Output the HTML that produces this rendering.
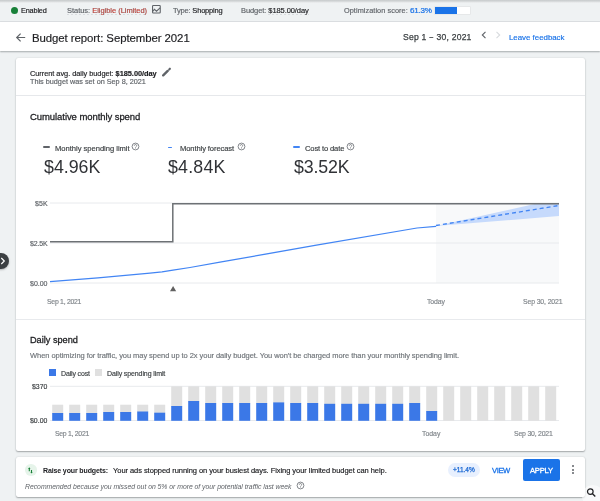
<!DOCTYPE html>
<html><head><meta charset="utf-8"><style>
html,body{margin:0;padding:0;}
body{width:600px;height:501px;overflow:hidden;position:relative;background:#eff2f3;font-family:"Liberation Sans",sans-serif;}
.t{position:absolute;line-height:1;white-space:nowrap;will-change:transform;}
</style></head><body>
<div style="position:absolute;left:0;top:0;width:600px;height:21px;background:linear-gradient(#c9cdce 0,#cfd2d3 1px,#e7e9ea 2.3px,#eff2f3 3.5px);border-bottom:1px solid #dcdfe2"></div><div style="position:absolute;left:11.1px;top:6.9px;width:7px;height:7px;border-radius:50%;background:#188038"></div><div style="position:absolute;left:67px;top:14px;width:80px;height:1px;background:repeating-linear-gradient(90deg,#d9dcdf 0 2px,transparent 2px 4px)"></div><svg style="position:absolute;left:152px;top:5.2px" width="9" height="9" viewBox="0 0 9 9"><rect x="0.55" y="0.55" width="7.7" height="7.5" rx="0.7" fill="none" stroke="#5f6368" stroke-width="1.1"/><polyline points="0.6,6.5 2.4,4.3 4.5,6.2 8.1,2.9" fill="none" stroke="#5f6368" stroke-width="1.05"/></svg><div style="position:absolute;left:268px;top:14px;width:41px;height:1px;background:repeating-linear-gradient(90deg,#d9dcdf 0 2px,transparent 2px 4px)"></div><div style="position:absolute;left:434.8px;top:6.7px;width:35.3px;height:7.3px;background:#fff;box-shadow:0 0 0 0.6px #dfe1e3"></div><div style="position:absolute;left:435.1px;top:7.0px;width:21.7px;height:6.8px;background:#1a73e8"></div><div style="position:absolute;left:0;top:22px;width:600px;height:29px;background:#fff;box-shadow:0 1px 1.5px rgba(60,64,67,.4)"></div><svg style="position:absolute;left:15px;top:32px" width="11" height="11" viewBox="0 0 11 11"><path d="M10.2 5.5H1.8M5.6 1.6L1.7 5.5L5.6 9.4" fill="none" stroke="#5f6368" stroke-width="1.2"/></svg><svg style="position:absolute;left:480px;top:30.3px" width="8" height="10" viewBox="0 0 8 10"><path d="M5.5 1.8L2.3 5L5.5 8.2" fill="none" stroke="#5f6368" stroke-width="1.1"/></svg><svg style="position:absolute;left:494px;top:30.3px" width="8" height="10" viewBox="0 0 8 10"><path d="M2.5 1.8L5.7 5L2.5 8.2" fill="none" stroke="#d8dbde" stroke-width="1.1"/></svg><div style="position:absolute;left:16px;top:57.5px;width:569px;height:393.3px;border-radius:2px;background:#fff;box-shadow:0 1px 1.5px rgba(60,64,67,.4),0 0 1.5px rgba(60,64,67,.2)"></div><svg style="position:absolute;left:161.2px;top:65.8px" width="11" height="11" viewBox="0 0 11 11"><path d="M2.2 9.4L6.7 4.9" stroke="#5f6368" stroke-width="2.3" stroke-linecap="round"/><path d="M8.2 3.4L8.9 2.7" stroke="#5f6368" stroke-width="2.1" stroke-linecap="round"/></svg><div style="position:absolute;left:16px;top:95.4px;width:569px;height:1px;background:#e6e8eb"></div><div style="position:absolute;left:43px;top:146.1px;width:7px;height:2.2px;border-radius:1.1px;background:#5f6368"></div><svg style="position:absolute;left:131.2px;top:141.5px" width="9" height="9" viewBox="0 0 9 9"><circle cx="4.5" cy="4.5" r="3.4" fill="none" stroke="#6f7378" stroke-width="0.85"/><path d="M3.3 3.7a1.2 1.15 0 1 1 1.75 1.0c-.4.25-.55.45-.55.95" fill="none" stroke="#6f7378" stroke-width="0.8"/><circle cx="4.5" cy="6.6" r="0.45" fill="#6f7378"/></svg><div style="position:absolute;left:168px;top:146.6px;width:4px;height:1.4px;border-radius:.7px;background:#4285f4"></div><svg style="position:absolute;left:237.0px;top:141.5px" width="9" height="9" viewBox="0 0 9 9"><circle cx="4.5" cy="4.5" r="3.4" fill="none" stroke="#6f7378" stroke-width="0.85"/><path d="M3.3 3.7a1.2 1.15 0 1 1 1.75 1.0c-.4.25-.55.45-.55.95" fill="none" stroke="#6f7378" stroke-width="0.8"/><circle cx="4.5" cy="6.6" r="0.45" fill="#6f7378"/></svg><div style="position:absolute;left:292.8px;top:146.3px;width:6.9px;height:2px;border-radius:1px;background:#4285f4"></div><svg style="position:absolute;left:346.2px;top:141.5px" width="9" height="9" viewBox="0 0 9 9"><circle cx="4.5" cy="4.5" r="3.4" fill="none" stroke="#6f7378" stroke-width="0.85"/><path d="M3.3 3.7a1.2 1.15 0 1 1 1.75 1.0c-.4.25-.55.45-.55.95" fill="none" stroke="#6f7378" stroke-width="0.8"/><circle cx="4.5" cy="6.6" r="0.45" fill="#6f7378"/></svg><svg style="position:absolute;left:0;top:0" width="600" height="501" viewBox="0 0 600 501"><rect x="436" y="203" width="123" height="80" fill="#f8f9fa"/><line x1="50" y1="203" x2="559" y2="203" stroke="#e8eaed" stroke-width="1"/><line x1="50" y1="243" x2="559" y2="243" stroke="#e8eaed" stroke-width="1"/><line x1="50" y1="283" x2="559" y2="283" stroke="#e8eaed" stroke-width="1"/><polygon points="436,225.9 534.6,204 559,204 559,216.1" fill="#c6dafc"/><polyline points="50,241.7 172.8,241.7 172.8,203.7 559,203.7" fill="none" stroke="#6d7175" stroke-width="1.5"/><polyline points="50,281.7 98,277.8 150,273.1 162,271.9 173,270.2 190,267.5 220,262.2 315,245.4 417,228 436,226.3" fill="none" stroke="#4285f4" stroke-width="1.25" stroke-linejoin="round"/><line x1="436" y1="225.5" x2="559" y2="205.5" stroke="#4285f4" stroke-width="1.3" stroke-dasharray="4 3"/><polygon points="170,291.2 173.1,286.1 176.2,291.2" fill="#606060"/><line x1="50" y1="386.3" x2="559" y2="386.3" stroke="#e8eaed" stroke-width="1"/><line x1="50" y1="420.5" x2="559" y2="420.5" stroke="#e8eaed" stroke-width="1"/><rect x="52.2" y="404.7" width="11" height="8.8" fill="#e0e0e0"/><rect x="52.2" y="413" width="11" height="7.8" fill="#3b78e7"/><rect x="69.2" y="404.7" width="11" height="8.8" fill="#e0e0e0"/><rect x="69.2" y="413" width="11" height="7.8" fill="#3b78e7"/><rect x="86.2" y="404.7" width="11" height="8.8" fill="#e0e0e0"/><rect x="86.2" y="413" width="11" height="7.8" fill="#3b78e7"/><rect x="103.2" y="404.7" width="11" height="7.8" fill="#e0e0e0"/><rect x="103.2" y="412" width="11" height="8.8" fill="#3b78e7"/><rect x="120.2" y="404.7" width="11" height="7.8" fill="#e0e0e0"/><rect x="120.2" y="412" width="11" height="8.8" fill="#3b78e7"/><rect x="137.2" y="404.7" width="11" height="7.3" fill="#e0e0e0"/><rect x="137.2" y="411.5" width="11" height="9.3" fill="#3b78e7"/><rect x="154.2" y="404.7" width="11" height="8.5" fill="#e0e0e0"/><rect x="154.2" y="412.7" width="11" height="8.1" fill="#3b78e7"/><rect x="171.2" y="386.3" width="11" height="20.2" fill="#e0e0e0"/><rect x="171.2" y="406" width="11" height="14.8" fill="#3b78e7"/><rect x="188.2" y="386.3" width="11" height="15.2" fill="#e0e0e0"/><rect x="188.2" y="401" width="11" height="19.8" fill="#3b78e7"/><rect x="205.2" y="386.3" width="11" height="17.2" fill="#e0e0e0"/><rect x="205.2" y="403" width="11" height="17.8" fill="#3b78e7"/><rect x="222.2" y="386.3" width="11" height="17.2" fill="#e0e0e0"/><rect x="222.2" y="403" width="11" height="17.8" fill="#3b78e7"/><rect x="239.2" y="386.3" width="11" height="17.2" fill="#e0e0e0"/><rect x="239.2" y="403" width="11" height="17.8" fill="#3b78e7"/><rect x="256.2" y="386.3" width="11" height="17.2" fill="#e0e0e0"/><rect x="256.2" y="403" width="11" height="17.8" fill="#3b78e7"/><rect x="273.2" y="386.3" width="11" height="16.6" fill="#e0e0e0"/><rect x="273.2" y="402.4" width="11" height="18.4" fill="#3b78e7"/><rect x="290.2" y="386.3" width="11" height="17.2" fill="#e0e0e0"/><rect x="290.2" y="403" width="11" height="17.8" fill="#3b78e7"/><rect x="307.2" y="386.3" width="11" height="17.2" fill="#e0e0e0"/><rect x="307.2" y="403" width="11" height="17.8" fill="#3b78e7"/><rect x="324.2" y="386.3" width="11" height="18.0" fill="#e0e0e0"/><rect x="324.2" y="403.8" width="11" height="17.0" fill="#3b78e7"/><rect x="341.2" y="386.3" width="11" height="18.0" fill="#e0e0e0"/><rect x="341.2" y="403.8" width="11" height="17.0" fill="#3b78e7"/><rect x="358.2" y="386.3" width="11" height="18.0" fill="#e0e0e0"/><rect x="358.2" y="403.8" width="11" height="17.0" fill="#3b78e7"/><rect x="375.2" y="386.3" width="11" height="18.0" fill="#e0e0e0"/><rect x="375.2" y="403.8" width="11" height="17.0" fill="#3b78e7"/><rect x="392.2" y="386.3" width="11" height="18.0" fill="#e0e0e0"/><rect x="392.2" y="403.8" width="11" height="17.0" fill="#3b78e7"/><rect x="409.2" y="386.3" width="11" height="17.2" fill="#e0e0e0"/><rect x="409.2" y="403" width="11" height="17.8" fill="#3b78e7"/><rect x="426.2" y="386.3" width="11" height="25.2" fill="#e0e0e0"/><rect x="426.2" y="411" width="11" height="9.8" fill="#3b78e7"/><rect x="443.2" y="386.3" width="11" height="34.5" fill="#e0e0e0"/><rect x="460.2" y="386.3" width="11" height="34.5" fill="#e0e0e0"/><rect x="477.2" y="386.3" width="11" height="34.5" fill="#e0e0e0"/><rect x="494.2" y="386.3" width="11" height="34.5" fill="#e0e0e0"/><rect x="511.2" y="386.3" width="11" height="34.5" fill="#e0e0e0"/><rect x="528.2" y="386.3" width="11" height="34.5" fill="#e0e0e0"/><rect x="545.2" y="386.3" width="11" height="34.5" fill="#e0e0e0"/></svg><div style="position:absolute;left:16px;top:319px;width:569px;height:1px;background:#e8eaed"></div><div style="position:absolute;left:49.2px;top:369.2px;width:7px;height:6.6px;background:#3b78e7"></div><div style="position:absolute;left:95px;top:369.2px;width:7px;height:6.6px;background:#e0e0e0"></div><div style="position:absolute;left:16px;top:456.8px;width:569px;height:40.5px;border-radius:2px;background:#fff;box-shadow:0 1px 1.5px rgba(60,64,67,.4),0 0 1.5px rgba(60,64,67,.2)"></div><div style="position:absolute;left:25.05px;top:464.35px;width:11.5px;height:11.5px;border-radius:50%;background:#e6f4ea"></div><svg style="position:absolute;left:25.1px;top:464.7px" width="12" height="12" viewBox="0 0 12 12"><path d="M4.3 6.2V3.4M6.5 5.0V7.4" fill="none" stroke="#188038" stroke-width="1.1"/><path d="M3.1 3.9L4.3 2.2L5.5 3.9zM5.3 6.9L6.5 8.6L7.7 6.9z" fill="#188038"/></svg><svg style="position:absolute;left:296.0px;top:481.3px" width="9" height="9" viewBox="0 0 9 9"><circle cx="4.5" cy="4.5" r="3.4" fill="none" stroke="#6f7378" stroke-width="0.85"/><path d="M3.3 3.7a1.2 1.15 0 1 1 1.75 1.0c-.4.25-.55.45-.55.95" fill="none" stroke="#6f7378" stroke-width="0.8"/><circle cx="4.5" cy="6.6" r="0.45" fill="#6f7378"/></svg><div style="position:absolute;left:448px;top:463px;width:32.4px;height:14px;border-radius:7px;background:#e8f0fe"></div><div style="position:absolute;left:523.1px;top:459.1px;width:37px;height:21.5px;border-radius:2px;background:#1a73e8"></div><div style="position:absolute;left:572.3px;top:465.1px;width:2px;height:2px;border-radius:50%;background:#5f6368"></div><div style="position:absolute;left:572.3px;top:468.8px;width:2px;height:2px;border-radius:50%;background:#5f6368"></div><div style="position:absolute;left:572.3px;top:472.4px;width:2px;height:2px;border-radius:50%;background:#5f6368"></div><div style="position:absolute;left:-7.8px;top:252.8px;width:16.4px;height:16.4px;border-radius:50%;background:#3c4043;box-shadow:0 1px 2px rgba(0,0,0,.25)"></div><svg style="position:absolute;left:0;top:256.3px" width="8" height="10" viewBox="0 0 8 10"><path d="M1.3 2L4.3 5L1.3 8" fill="none" stroke="#fff" stroke-width="1.2"/></svg><div style="position:absolute;left:582px;top:485px;width:22px;height:22px;border-radius:50%;background:rgba(255,255,255,.55)"></div><svg style="position:absolute;left:584px;top:485px" width="14" height="14" viewBox="0 0 14 14"><circle cx="6.3" cy="6.6" r="2.8" fill="none" stroke="#202124" stroke-width="1.2"/><path d="M8.3 8.6L11.3 11.4" stroke="#202124" stroke-width="1.4"/></svg><div class="t" style="left:20.82px;top:6.67px;font-size:7.3px;color:#202124;letter-spacing:-0.161px;-webkit-text-stroke:0.16px #202124;">Enabled</div>
<div class="t" style="left:67.00px;top:7.40px;font-size:7.5px;color:#5f6368;letter-spacing:-0.032px;-webkit-text-stroke:0.16px #5f6368;">Status: <span style="color:#d93025">Eligible (Limited)</span></div>
<div class="t" style="left:172.50px;top:7.40px;font-size:7.5px;color:#5f6368;letter-spacing:-0.185px;-webkit-text-stroke:0.16px #5f6368;">Type: <span style="color:#202124;-webkit-text-stroke:0.15px #202124">Shopping</span></div>
<div class="t" style="left:240.68px;top:6.50px;font-size:7.5px;color:#5f6368;letter-spacing:-0.081px;-webkit-text-stroke:0.16px #5f6368;">Budget: <span style="color:#202124;-webkit-text-stroke:0.15px #202124">$185.00/day</span></div>
<div class="t" style="left:343.54px;top:6.62px;font-size:7.3px;color:#5f6368;letter-spacing:0.067px;-webkit-text-stroke:0.16px #5f6368;">Optimization score:</div>
<div class="t" style="left:409.82px;top:6.94px;font-size:8.1px;color:#1a73e8;letter-spacing:-0.240px;-webkit-text-stroke:0.22px #1a73e8;">61.3%</div>
<div class="t" style="left:32.08px;top:32.95px;font-size:11.4px;color:#202124;letter-spacing:-0.066px;-webkit-text-stroke:0.16px #202124;">Budget report: September 2021</div>
<div class="t" style="left:402.82px;top:32.92px;font-size:8.6px;color:#3c4043;letter-spacing:0.193px;-webkit-text-stroke:0.25px #3c4043;">Sep 1 <span style="display:inline-block;transform:scaleX(.75)">–</span> 30, 2021</div>
<div class="t" style="left:508.82px;top:33.81px;font-size:7.9px;color:#1a73e8;letter-spacing:-0.017px;-webkit-text-stroke:0.16px #1a73e8;">Leave feedback</div>
<div class="t" style="left:29.68px;top:69.74px;font-size:7.4px;color:#202124;letter-spacing:-0.041px;-webkit-text-stroke:0.16px #202124;">Current avg. daily budget: <b>$185.00/day</b></div>
<div class="t" style="left:29.68px;top:77.86px;font-size:7.25px;color:#5f6368;letter-spacing:0.007px;-webkit-text-stroke:0.16px #5f6368;">This budget was set on Sep 8, 2021</div>
<div class="t" style="left:30.00px;top:112.16px;font-size:9.5px;color:#202124;letter-spacing:-0.070px;-webkit-text-stroke:0.26px #202124;">Cumulative monthly spend</div>
<div class="t" style="left:55.00px;top:144.77px;font-size:7.6px;color:#3c4043;letter-spacing:-0.024px;-webkit-text-stroke:0.16px #3c4043;">Monthly spending limit</div>
<div class="t" style="left:179.86px;top:144.57px;font-size:7.6px;color:#3c4043;letter-spacing:-0.107px;-webkit-text-stroke:0.16px #3c4043;">Monthly forecast</div>
<div class="t" style="left:304.82px;top:144.57px;font-size:7.6px;color:#3c4043;letter-spacing:-0.145px;-webkit-text-stroke:0.16px #3c4043;">Cost to date</div>
<div class="t" style="left:43.82px;top:158.53px;font-size:17.8px;color:#303236;">$4.96K</div>
<div class="t" style="left:168.18px;top:158.53px;font-size:17.8px;color:#303236;letter-spacing:0.192px;">$4.84K</div>
<div class="t" style="left:294.00px;top:158.53px;font-size:17.8px;color:#303236;letter-spacing:-0.160px;">$3.52K</div>
<div class="t" style="left:34.68px;top:199.97px;font-size:7.0px;color:#5f6368;letter-spacing:0.160px;-webkit-text-stroke:0.16px #5f6368;">$5K</div>
<div class="t" style="left:29.50px;top:240.07px;font-size:7.0px;color:#5f6368;letter-spacing:-0.160px;-webkit-text-stroke:0.16px #5f6368;">$2.5K</div>
<div class="t" style="left:29.82px;top:279.97px;font-size:7.0px;color:#5f6368;-webkit-text-stroke:0.16px #5f6368;">$0.00</div>
<div class="t" style="left:47.32px;top:299.46px;font-size:6.9px;color:#80868b;letter-spacing:-0.272px;-webkit-text-stroke:0.16px #80868b;">Sep 1, 2021</div>
<div class="t" style="left:427.00px;top:299.16px;font-size:6.9px;color:#80868b;letter-spacing:-0.120px;-webkit-text-stroke:0.16px #80868b;">Today</div>
<div class="t" style="left:522.50px;top:299.16px;font-size:6.9px;color:#80868b;letter-spacing:-0.127px;-webkit-text-stroke:0.16px #80868b;">Sep 30, 2021</div>
<div class="t" style="left:29.82px;top:335.61px;font-size:9.2px;color:#202124;letter-spacing:-0.016px;-webkit-text-stroke:0.28px #202124;">Daily spend</div>
<div class="t" style="left:29.82px;top:351.95px;font-size:7.5px;color:#70757a;letter-spacing:-0.055px;-webkit-text-stroke:0.16px #70757a;">When optimizing for traffic, you may spend up to 2x your daily budget. You won't be charged more than your monthly spending limit.</div>
<div class="t" style="left:60.68px;top:370.07px;font-size:7.0px;color:#3c4043;letter-spacing:-0.157px;-webkit-text-stroke:0.16px #3c4043;">Daily cost</div>
<div class="t" style="left:106.82px;top:370.07px;font-size:7.0px;color:#3c4043;letter-spacing:-0.106px;-webkit-text-stroke:0.16px #3c4043;">Daily spending limit</div>
<div class="t" style="left:31.50px;top:384.06px;font-size:6.9px;color:#3c4043;-webkit-text-stroke:0.16px #3c4043;">$370</div>
<div class="t" style="left:29.68px;top:418.36px;font-size:6.9px;color:#3c4043;letter-spacing:0.040px;-webkit-text-stroke:0.16px #3c4043;">$0.00</div>
<div class="t" style="left:54.68px;top:431.36px;font-size:6.9px;color:#80868b;letter-spacing:-0.288px;-webkit-text-stroke:0.16px #80868b;">Sep 1, 2021</div>
<div class="t" style="left:422.32px;top:431.46px;font-size:6.9px;color:#80868b;-webkit-text-stroke:0.16px #80868b;">Today</div>
<div class="t" style="left:514.00px;top:431.16px;font-size:6.9px;color:#80868b;letter-spacing:-0.198px;-webkit-text-stroke:0.16px #80868b;">Sep 30, 2021</div>
<div class="t" style="left:43.18px;top:466.97px;font-size:7.0px;color:#202124;letter-spacing:-0.125px;font-weight:700;">Raise your budgets:</div>
<div class="t" style="left:113.32px;top:466.55px;font-size:7.5px;color:#202124;letter-spacing:-0.055px;-webkit-text-stroke:0.16px #202124;">Your ads stopped running on your busiest days. Fixing your limited budget can help.</div>
<div class="t" style="left:25.46px;top:484.20px;font-size:6.85px;color:#5f6368;letter-spacing:-0.025px;font-style:italic;">Recommended because you missed out on 5% or more of your potential traffic last week</div>
<div class="t" style="left:453.00px;top:466.70px;font-size:6.5px;color:#1967d2;-webkit-text-stroke:0.25px #1967d2;">+11.4%</div>
<div class="t" style="left:491.64px;top:467.47px;font-size:7.6px;color:#1a73e8;letter-spacing:-0.377px;-webkit-text-stroke:0.3px #1a73e8;">VIEW</div>
<div class="t" style="left:530.00px;top:467.47px;font-size:7.6px;color:#ffffff;letter-spacing:-0.200px;-webkit-text-stroke:0.3px #ffffff;">APPLY</div>
</body></html>
